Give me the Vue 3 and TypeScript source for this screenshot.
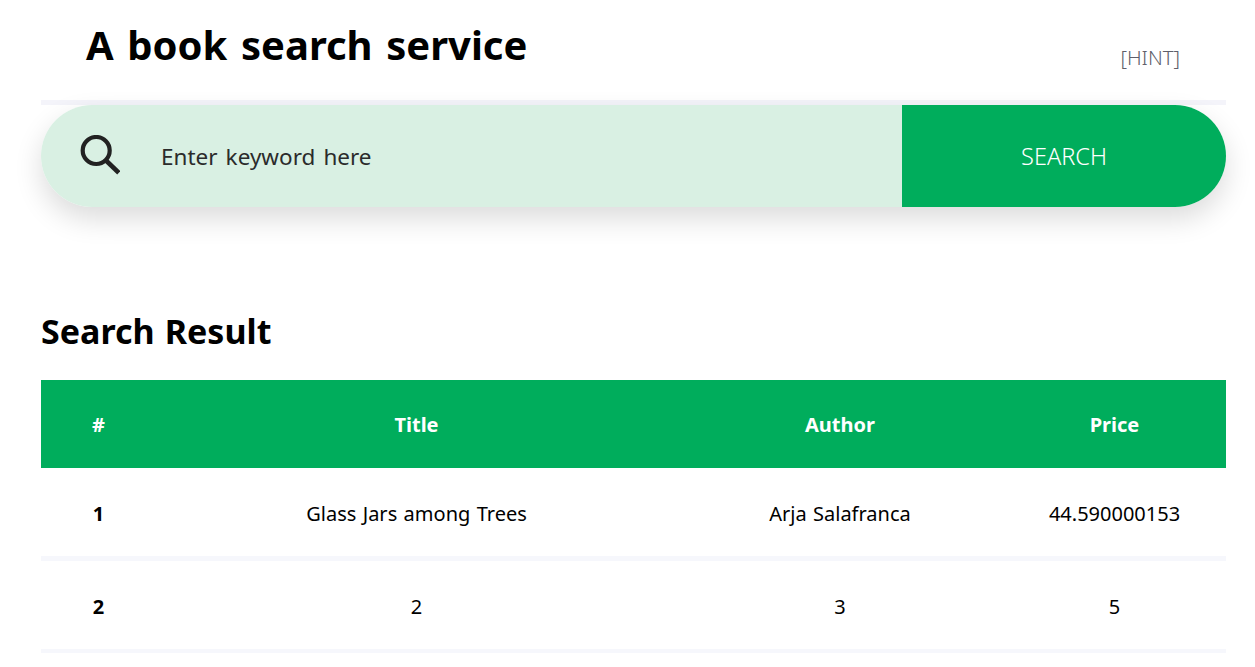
<script setup lang="ts">
interface Book { id: number; title: string; author: string; price: string }
const books: Book[] = [
  { id: 1, title: 'Glass Jars among Trees', author: 'Arja Salafranca', price: '44.590000153' },
  { id: 2, title: '2', author: '3', price: '5' },
]
</script>

<template>
  <div class="page">
    <header class="top">
      <h1 class="brand">A book search service</h1>
      <a class="hint">[HINT]</a>
    </header>
    <form class="search" @submit.prevent>
      <div class="field">
        <svg class="icon" viewBox="0 0 40 40" width="40" height="40" aria-hidden="true">
          <circle cx="16.2" cy="15.5" r="13.5" fill="none" stroke="#222" stroke-width="4.2" />
          <path d="M25.5 25 L38.8 37.8" fill="none" stroke="#222" stroke-width="4.6" />
        </svg>
        <span class="placeholder">Enter keyword here</span>
      </div>
      <button class="go" type="submit">SEARCH</button>
    </form>
    <h2 class="heading">Search Result</h2>
    <table class="results">
      <colgroup>
        <col class="c1" /><col class="c2" /><col class="c3" /><col class="c4" />
      </colgroup>
      <thead>
        <tr><th>#</th><th>Title</th><th>Author</th><th>Price</th></tr>
      </thead>
      <tbody>
        <tr v-for="b in books" :key="b.id">
          <td class="num">{{ b.id }}</td>
          <td>{{ b.title }}</td>
          <td>{{ b.author }}</td>
          <td>{{ b.price }}</td>
        </tr>
      </tbody>
    </table>
  </div>
</template>

<style>
html, body { background: #fff; }
</style>

<style scoped>
.page {
  box-sizing: border-box;
  width: 1255px;
  height: 667px;
  overflow: hidden;
  padding: 0 29px 0 41px;
  font-family: "Noto Sans", "Noto Sans CJK KR", sans-serif;
  color: #000;
}
.top {
  display: flex;
  justify-content: space-between;
  height: 105px;
  padding: 0 46px 0 45px;
  box-sizing: border-box;
  border-bottom: 5px solid #f4f4fa;
}
.brand {
  margin: 18px 0 0;
  font-size: 40px;
  line-height: 54px;
  font-weight: 700;
  word-spacing: 0.08em;
}
.hint {
  margin-top: 43px;
  font-size: 20.3px;
  line-height: 28px;
  font-weight: 300;
  color: #5f5f6a;
}
.search {
  display: flex;
  height: 102px;
  margin: 0;
  border-radius: 51px;
  box-shadow: 0 12px 28px rgba(0, 0, 0, 0.14);
}
.field {
  flex: 1;
  display: flex;
  align-items: center;
  background: #d9f0e3;
  border-radius: 51px 0 0 51px;
  padding-left: 39px;
}
.icon { flex: none; margin-top: -2px; }
.placeholder {
  margin-left: 41px;
  font-size: 22.5px;
  word-spacing: 0.1em;
  color: #2b2b2b;
}
.go {
  flex: none;
  width: 324px;
  height: 102px;
  border: 0;
  padding: 0;
  background: #00ad5c;
  color: #fff;
  font: inherit;
  font-size: 23.5px;
  font-weight: 300;
  border-radius: 0 51px 51px 0;
}
.heading {
  margin: 99px 0 24px;
  font-size: 34px;
  line-height: 50px;
  font-weight: 700;
  word-spacing: 0.04em;
}
.results {
  width: 1185px;
  table-layout: fixed;
  border-collapse: separate;
  border-spacing: 0;
  text-align: center;
  font-size: 20px;
  word-spacing: 0.06em;
}
.c1 { width: 115px; }
.c2 { width: 521px; }
.c3 { width: 326px; }
.c4 { width: 223px; }
th {
  height: 88px;
  padding: 0;
  background: #00ad5c;
  color: #fff;
  font-size: 20px;
  font-weight: 700;
}
td {
  box-sizing: border-box;
  height: 93px;
  padding: 2px 0 0;
  border-bottom: 5px solid #f6f7fc;
}
tr:last-child td {
  height: 92px;
  border-bottom-width: 4px;
}
.num { font-weight: 700; }
</style>
